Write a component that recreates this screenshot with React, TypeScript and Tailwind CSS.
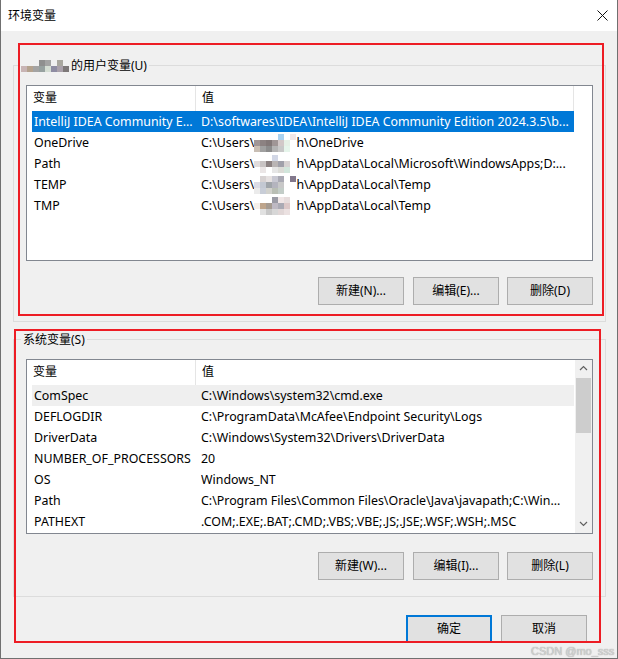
import React from "react";

type Cells = (string | null)[][];

// pixelated blur over the user name
const Mosaic = ({ cells, size = 6 }: { cells: Cells; size?: number }) => (
  <svg
    width={cells[0].length * size}
    height={cells.length * size}
    className="inline-block align-middle"
  >
    {cells.map((row, r) =>
      row.map((c, i) =>
        c ? <rect key={`${r}-${i}`} x={i * size} y={r * size} width={size} height={size} fill={c} /> : null
      )
    )}
  </svg>
);

const labelBlur: Cells = [
  [null, null, null, "#8f8f8f", "#a3a3a3", null, "#a9a79f", null],
  ["#c8b4b4", "#b4a28e", "#a3a3a3", "#97a1a0", "#d4ddd3", "#8e8ca2", "#aaa1ab", "#7d7878"],
];

const rowBlurs: Cells[] = [
  [
    [null, null, null, null, "#aad2f0", null, "#f2e8e8"],
    ["#a09696", "#8c8282", "#827878", "#a09696", "#d2c8c8", "#e6f0e6", null],
    ["#c8beb4", "#a0a0a0", "#8c8c8c", "#b4b4b4", "#c8c8c8", "#e6f5eb", null],
  ],
  [
    [null, null, null, "#d2d7e6", null, null, null],
    ["#e1dcdc", "#c8c3c3", "#8c8282", "#b9b4b4", "#a0a0aa", "#d7d2d2", null],
    [null, "#ebe6e6", null, "#e6e6e6", "#dcdcd7", "#d2e6dc", null],
  ],
  [
    [null, "#d7d2d2", "#e6e1e1", "#c8c8d2", "#aaaab4", null, "#82788c"],
    ["#dcdce6", "#c3c8d2", "#a0a5aa", "#b4b4be", "#c8c8c8", null, null],
    ["#ebebeb", "#c8cdd7", "#d2d2cd", "#b9beb4", "#c3cdc8", null, null],
  ],
  [
    [null, null, null, "#9b9ba5", "#f0e6e6", "#e6dcdc", null],
    ["#f5f0eb", "#bea58c", "#a59b91", "#beb9c3", "#aaaab4", "#dcc8c8", null],
    [null, "#e1e1e1", "#c8c8c8", "#d7d7d7", "#e1d7d7", "#ebe1e1", null],
  ],
];

const Users = "C:\\Users\\";

type Row = { name: string; value: React.ReactNode };

const userRows: Row[] = [
  { name: "IntelliJ IDEA Community E...", value: "D:\\softwares\\IDEA\\IntelliJ IDEA Community Edition 2024.3.5\\b..." },
  { name: "OneDrive", value: <>{Users}<Mosaic cells={rowBlurs[0]} />{"h\\OneDrive"}</> },
  { name: "Path", value: <>{Users}<Mosaic cells={rowBlurs[1]} />{"h\\AppData\\Local\\Microsoft\\WindowsApps;D:..."}</> },
  { name: "TEMP", value: <>{Users}<Mosaic cells={rowBlurs[2]} />{"h\\AppData\\Local\\Temp"}</> },
  { name: "TMP", value: <>{Users}<Mosaic cells={rowBlurs[3]} />{"h\\AppData\\Local\\Temp"}</> },
];

const sysRows: Row[] = [
  { name: "ComSpec", value: "C:\\Windows\\system32\\cmd.exe" },
  { name: "DEFLOGDIR", value: "C:\\ProgramData\\McAfee\\Endpoint Security\\Logs" },
  { name: "DriverData", value: "C:\\Windows\\System32\\Drivers\\DriverData" },
  { name: "NUMBER_OF_PROCESSORS", value: "20" },
  { name: "OS", value: "Windows_NT" },
  { name: "Path", value: "C:\\Program Files\\Common Files\\Oracle\\Java\\javapath;C:\\Win..." },
  { name: "PATHEXT", value: ".COM;.EXE;.BAT;.CMD;.VBS;.VBE;.JS;.JSE;.WSF;.WSH;.MSC" },
];

const ListHeader = ({ lastDivider }: { lastDivider: boolean }) => (
  <div className="flex h-[25px] bg-white shrink-0">
    <div className="w-[169px] border-r border-[#e5e5e5] pl-[6px] leading-[24px]">变量</div>
    <div className={`w-[378px] pl-[6px] leading-[24px] ${lastDivider ? "border-r border-[#e5e5e5]" : ""}`}>值</div>
  </div>
);

const ListRow = ({ row, state }: { row: Row; state?: "selected" | "hover" }) => (
  <div
    className={`ml-[5px] flex h-[21px] w-[542px] shrink-0 items-center whitespace-nowrap text-[12.4px] leading-[21px] ${
      state === "selected" ? "bg-[#0078d7] text-white" : state === "hover" ? "bg-[#efefef]" : ""
    }`}
  >
    <div className="w-[169px] shrink-0 overflow-hidden pl-[2px]">{row.name}</div>
    <div className="flex-1 overflow-hidden">{row.value}</div>
  </div>
);

const Btn = ({ children, primary, className = "" }: { children: React.ReactNode; primary?: boolean; className?: string }) => (
  <div
    className={`flex h-[28px] w-[86px] items-center justify-center bg-[#e1e1e1] ${
      primary ? "border-2 border-[#0078d7]" : "border border-[#adadad]"
    } ${className}`}
  >
    {children}
  </div>
);

const Chevron = ({ up }: { up?: boolean }) => (
  <svg width="9" height="6" viewBox="0 0 9 6">
    <path d={up ? "M1 5 L4.5 1.5 L8 5" : "M1 1 L4.5 4.5 L8 1"} stroke="#606060" strokeWidth="1.2" fill="none" />
  </svg>
);

export default function App() {
  return (
    <div className="relative flex h-[659px] w-[618px] flex-col border-x border-b border-[#707070] bg-[#f0f0f0] text-[12px] text-black font-[family-name:'Noto_Sans','Noto_Sans_CJK_SC',sans-serif] select-none">
      {/* title bar */}
      <div className="flex h-[31px] shrink-0 items-center justify-between bg-white pl-[7px] pr-[9px]">
        <span className="text-[12px]">环境变量</span>
        <svg width="11" height="11" viewBox="0 0 11 11">
          <path d="M0.5 0.5 L10.5 10.5 M10.5 0.5 L0.5 10.5" stroke="#111" strokeWidth="1" />
        </svg>
      </div>

      <div className="flex flex-1 flex-col pl-[12px]">
        {/* user variables */}
        <fieldset className="mt-[26px] w-[593px] border border-[#dcdcdc]">
          <legend className="ml-[5px] px-[2px] leading-[16px]">
            <Mosaic cells={labelBlur} />
            <span className="ml-[2px] align-middle">的用户变量(U)</span>
          </legend>
          <div className="ml-[12px] mt-[11px] flex h-[176px] w-[567px] flex-col border border-[#828790] bg-white">
            <ListHeader lastDivider />
            {userRows.map((r, i) => (
              <ListRow key={r.name} row={r} state={i === 0 ? "selected" : undefined} />
            ))}
          </div>
          <div className="mr-[12px] mt-[16px] mb-[16px] flex justify-end">
            <Btn>新建(N)...</Btn>
            <Btn className="ml-[9px]">编辑(E)...</Btn>
            <Btn className="ml-[8px]">删除(D)</Btn>
          </div>
        </fieldset>

        {/* system variables */}
        <fieldset className="mt-[10px] w-[593px] border border-[#dcdcdc]">
          <legend className="ml-[7px] px-[2px] leading-[16px]">系统变量(S)</legend>
          <div className="ml-[12px] mt-[11px] flex h-[175px] w-[567px] border border-[#828790] bg-white">
            <div className="flex w-[548px] flex-col overflow-hidden">
              <ListHeader lastDivider={false} />
              {sysRows.map((r, i) => (
                <ListRow key={r.name} row={r} state={i === 0 ? "hover" : undefined} />
              ))}
            </div>
            <div className="flex w-[17px] flex-col bg-[#f0f0f0]">
              <div className="flex h-[17px] items-center justify-center">
                <Chevron up />
              </div>
              <div className="mx-[1px] mt-[1px] h-[55px] bg-[#cdcdcd]" />
              <div className="flex-1" />
              <div className="flex h-[17px] items-center justify-center">
                <Chevron />
              </div>
            </div>
          </div>
          <div className="mr-[12px] mt-[18px] mb-[16px] flex justify-end">
            <Btn>新建(W)...</Btn>
            <Btn className="ml-[9px]">编辑(I)...</Btn>
            <Btn className="ml-[8px]">删除(L)</Btn>
          </div>
        </fieldset>

        {/* dialog buttons */}
        <div className="mr-[30px] mt-[18px] flex justify-end">
          <Btn primary>确定</Btn>
          <Btn className="ml-[9px]">取消</Btn>
        </div>
      </div>

      {/* red annotation boxes */}
      <div className="pointer-events-none absolute left-[17px] top-[43px] h-[273px] w-[586px] border-2 border-[#ed1c24]" />
      <div className="pointer-events-none absolute left-[13px] top-[329px] h-[314px] w-[587px] border-2 border-[#ed1c24]" />

      {/* watermark */}
      <div className="pointer-events-none absolute left-[530px] top-[645px] whitespace-nowrap text-[11px] leading-[13px] text-[#d4d4d4] [text-shadow:0_0_1px_#8a8a8a] font-[family-name:'Liberation_Sans',sans-serif]">
        CSDN @mo_sss
      </div>
    </div>
  );
}
